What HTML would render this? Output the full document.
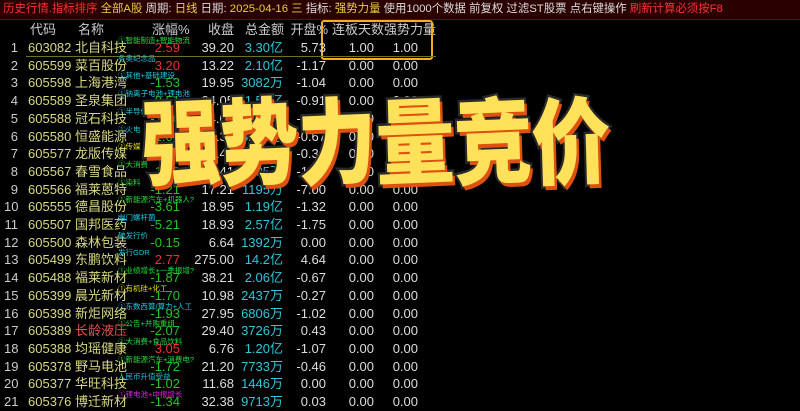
<!DOCTYPE html><html><head><meta charset="utf-8"><style>
body{margin:0;width:800px;height:407px;background:#000;overflow:hidden;position:relative;font-family:"Liberation Sans","Noto Sans CJK SC",sans-serif;}
.bar{position:absolute;left:0;top:0;width:800px;height:19px;background:#2a0000;border-bottom:1px solid #5a1010;font-size:11.4px;line-height:19px;white-space:nowrap;color:#ddd;}
.r{position:absolute;left:0;width:800px;height:18px;font-size:13px;line-height:18px;white-space:nowrap;}
.r span{position:absolute;}
.n{left:4px;width:14px;text-align:right;color:#ccc}
.c{left:28px;color:#d8d880}
.m{left:75px;color:#d8d880}
.p{right:620px;text-align:right}
.cl{right:566px;color:#ddd}
.a{right:517px;color:#2cc8d8}
.o{right:474px;color:#ddd}
.l{right:426px;color:#ddd}
.w{right:382px;color:#ddd}
.t{left:118px;top:-7px;font-size:7.5px;}
.h span{color:#ccc}
.g{color:#1ec81e}.red{color:#f03030}
#title{position:absolute;left:140px;top:88px;height:110px;}
#title b{position:absolute;top:0;font-size:94px;font-weight:900;color:#ffe25a;-webkit-text-stroke:5px #2a2a2a;paint-order:stroke fill;text-shadow:3px 4px 0 #e05010;transform:scaleX(.84) rotate(-2deg);transform-origin:left top;font-family:"Noto Sans CJK SC",sans-serif;line-height:100px}
</style></head><body>
<div class="bar"><span style="color:#ff3030">&nbsp;历史行情.指标排序</span> <span style="color:#e8d040">全部A股</span> 周期: <span style="color:#e8d040">日线</span> 日期: <span style="color:#e8d040">2025-04-16 三</span> 指标: <span style="color:#e8d040">强势力量</span> 使用1000个数据 前复权 过滤ST股票 点右键操作 <span style="color:#ff3030">刷新计算必须按F8</span></div>
<div class="r h" style="top:21px"><span style="left:30px">代码</span><span style="left:78px">名称</span><span style="left:152px">涨幅%</span><span style="right:566px">收盘</span><span style="right:516px">总金额</span><span style="right:472px">开盘%</span><span style="left:332px">连板天数强势力量</span></div>
<div style="position:absolute;left:321px;top:20px;width:108px;height:36px;border:2px solid #f0b020;border-radius:3px"></div>
<div style="position:absolute;left:26px;top:56px;width:410px;height:1px;background:#707020"></div>
<div id="r"></div>
<div id="title"><b style="left:0">强</b><b style="left:78px">势</b><b style="left:156px">力</b><b style="left:234px">量</b><b style="left:312px">竞</b><b style="left:390px">价</b></div>
<script>
var d=[["603082","北自科技","①智能制造+智能物流","#20e040","2.59","39.20","3.30亿","5.73","1.00","1.00"],
["605599","菜百股份","冬奥纪念品","#20c8e0","3.20","13.22","2.10亿","-1.17","0.00","0.00"],
["605598","上海港湾","①其他+基础建设","#20c8e0","-1.53","19.95","3082万","-1.04","0.00","0.00"],
["605589","圣泉集团","①钠离子电池+锂电池","#20c8e0","-0.51","24.05","1.52亿","-0.91","0.00","0.00"],
["605588","冠石科技","①半导体","#20c8e0","-1.20","44.01","8815万","-0.82","0.00","0.00"],
["605580","恒盛能源","①火电","#20c8e0","-1.05","10.33","3215万","-0.67","0.00","0.00"],
["605577","龙版传媒","①传媒","#e0e020","-0.48","12.45","2316万","-0.30","0.00","0.00"],
["605567","春雪食品","①大消费","#20e040","-1.88","9.41","1605万","-1.35","0.00","0.00"],
["605566","福莱蒽特","①染料","#20e040","-1.21","17.21","1195万","-7.00","0.00","0.00"],
["605555","德昌股份","①新能源汽车+机器人?","#20e040","-3.61","18.95","1.19亿","-1.32","0.00","0.00"],
["605507","国邦医药","幽门螺杆菌","#20c8e0","-5.21","18.93","2.57亿","-1.75","0.00","0.00"],
["605500","森林包装","破发行价","#20c8e0","-0.15","6.64","1392万","0.00","0.00","0.00"],
["605499","东鹏饮料","发行GDR","#20c8e0","2.77","275.00","14.2亿","4.64","0.00","0.00"],
["605488","福莱新材","①业绩增长+一季报增?","#20e040","-1.87","38.21","2.06亿","-0.67","0.00","0.00"],
["605399","晨光新材","①有机硅+化工","#e0e020","-1.70","10.98","2437万","-0.27","0.00","0.00"],
["605398","新炬网络","①东数西算/算力+人工","#20c8e0","-1.93","27.95","6806万","-1.02","0.00","0.00"],
["605389","长龄液压","①公告+并购重组","#20e040","-2.07","29.40","3726万","0.43","0.00","0.00"],
["605388","均瑶健康","①大消费+食品饮料","#20e040","3.05","6.76","1.20亿","-1.07","0.00","0.00"],
["605378","野马电池","①新能源汽车+消费电?","#20e040","-1.72","21.20","7733万","-0.46","0.00","0.00"],
["605377","华旺科技","人民币升值受益","#20c8e0","-1.02","11.68","1446万","0.00","0.00","0.00"],
["605376","博迁新材","①锂电池+中报增长","#e020e0","-1.34","32.38","9713万","0.03","0.00","0.00"]];
var h="";d.forEach(function(x,i){var y=39+i*17.7;var pc=x[4][0]=="-"?"g":"red";
h+='<div class="r" style="top:'+y+'px"><span class="n">'+(i+1)+'</span><span class="c">'+x[0]+'</span><span class="m"'+(i==16?' style="color:#f05050"':'')+'>'+x[1]+'</span><span class="t" style="color:'+x[3]+'">'+x[2]+'</span><span class="p '+pc+'">'+x[4]+'</span><span class="cl">'+x[5]+'</span><span class="a">'+x[6]+'</span><span class="o">'+x[7]+'</span><span class="l">'+x[8]+'</span><span class="w">'+x[9]+'</span></div>';});
document.getElementById("r").innerHTML=h;
</script></body></html>
